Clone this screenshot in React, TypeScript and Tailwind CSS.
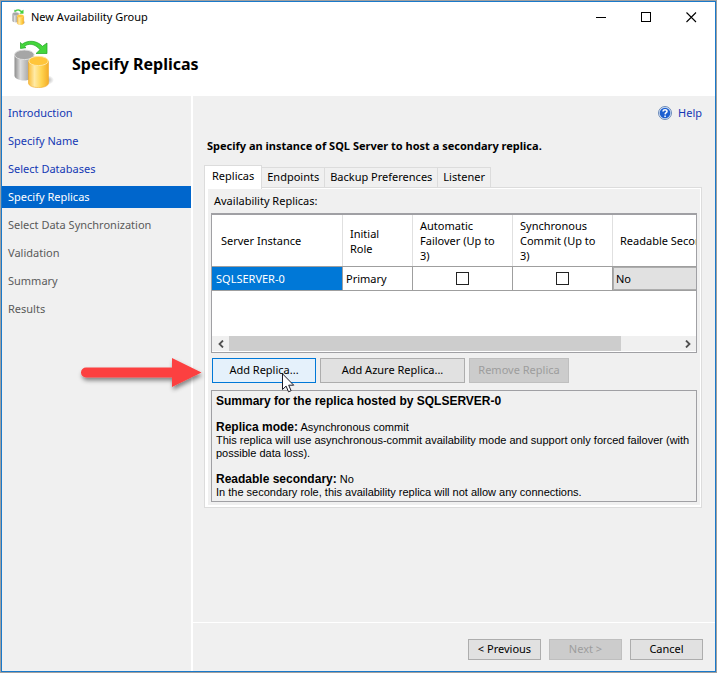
import { useState } from "react";

type Step = { label: string; state: "done" | "current" | "pending" };

const steps: Step[] = [
  { label: "Introduction", state: "done" },
  { label: "Specify Name", state: "done" },
  { label: "Select Databases", state: "done" },
  { label: "Specify Replicas", state: "current" },
  { label: "Select Data Synchronization", state: "pending" },
  { label: "Validation", state: "pending" },
  { label: "Summary", state: "pending" },
  { label: "Results", state: "pending" },
];

const stepStyles = {
  done: "text-[#1438b4]",
  current: "bg-[#0066cc] text-white",
  pending: "text-[#5a5a5a]",
};

const tabs = ["Replicas", "Endpoints", "Backup Preferences", "Listener"];

function ReplicaLogo({ className, id }: { className: string; id: string }) {
  return (
    <svg className={className} viewBox="0 0 40 48" aria-hidden="true">
      <defs>
        <linearGradient id={`${id}-grey`} x1="0" x2="1">
          <stop offset="0" stopColor="#8c8c8c" />
          <stop offset="0.3" stopColor="#dedede" />
          <stop offset="0.65" stopColor="#b2b2b2" />
          <stop offset="1" stopColor="#8c8c8c" />
        </linearGradient>
        <linearGradient id={`${id}-gold`} x1="0" x2="1">
          <stop offset="0" stopColor="#f9bd3c" />
          <stop offset="0.3" stopColor="#ffeaa6" />
          <stop offset="0.65" stopColor="#ffd450" />
          <stop offset="1" stopColor="#f4ad28" />
        </linearGradient>
        <radialGradient id={`${id}-shade`}>
          <stop offset="0" stopColor="#777" stopOpacity="0.7" />
          <stop offset="1" stopColor="#777" stopOpacity="0" />
        </radialGradient>
      </defs>
      <ellipse cx="32" cy="40" rx="8" ry="5" fill={`url(#${id}-shade)`} />
      <path d="M0.500 15.500v20c0 2.600 4 5 9.500 5s10-2.400 10-5v-20z" fill={`url(#${id}-grey)`} />
      <ellipse cx="10.300" cy="14.800" rx="9.800" ry="4.800" fill="#a6a6a6" stroke="#dedede" />
      <path d="M14.500 21v22c0 2.600 4 4.600 10 4.600s10-2 10-4.600V21z" fill={`url(#${id}-gold)`} stroke="#f0a92a" strokeWidth="0.600" />
      <ellipse cx="24.500" cy="21" rx="9.700" ry="4.600" fill="#ffc53a" stroke="#ffe6a0" />
      <path d="M6.500 2.500L8 4.300C13.500 0 22.500 0 28.500 6.300L33 3V13.500H22l4-3.800C21 3.500 14.500 3 10.500 6.300l1.500 1.400L6.500 8.500z" fill="#44d63c" stroke="#20a323" strokeWidth="0.700" />
    </svg>
  );
}

function TitleBar() {
  return (
    <div className="flex h-[30px] items-center pr-px">
      <ReplicaLogo id="small" className="ml-[9px] h-4 w-4" />
      <span className="ml-1 grow">New Availability Group</span>
      <button aria-label="Minimize" className="flex h-full w-[45px] items-center justify-center">
        <svg className="h-[11px] w-[11px]" viewBox="0 0 11 11" shapeRendering="crispEdges">
          <path d="M0 5.500h10" stroke="#000" />
        </svg>
      </button>
      <button aria-label="Maximize" className="flex h-full w-[45px] items-center justify-center">
        <svg className="h-[11px] w-[11px]" viewBox="0 0 11 11" shapeRendering="crispEdges">
          <path d="M0.500 0.500h9v9h-9z" fill="none" stroke="#000" />
        </svg>
      </button>
      <button aria-label="Close" className="flex h-full w-[45px] items-center justify-center">
        <svg className="h-[11px] w-[11px]" viewBox="0 0 11 11">
          <path d="M0.500 0.500l9.500 9.500M10 0.500L0.500 10" stroke="#000" strokeWidth="1.100" />
        </svg>
      </button>
    </div>
  );
}

function Sidebar() {
  return (
    <nav className="flex w-[191px] shrink-0 flex-col gap-1.5 border-r-2 border-white pt-1.5">
      {steps.map((step) => (
        <a key={step.label} href="#" className={`flex h-[22px] items-center pl-1.5 ${stepStyles[step.state]}`}>
          {step.label}
        </a>
      ))}
    </nav>
  );
}

function ReplicaGrid() {
  const [automatic, setAutomatic] = useState(false);
  const [synchronous, setSynchronous] = useState(false);
  const head = "border-r border-[#e0e0e0] px-[7px] font-normal";
  const cell = "border-t border-r border-b border-[#9f9f9f]";
  const box = "block mx-auto h-[13px] w-[13px] appearance-none border border-[#222] bg-white";
  return (
    <div className="flex h-[140px] flex-col overflow-hidden border border-t-2 border-[#a0a0a4] bg-white">
      <div className="min-h-0 grow overflow-hidden">
        <table className="w-[560px] table-fixed border-separate border-spacing-0 text-left leading-[15px]">
          <colgroup>
            <col className="w-[131px]" />
            <col className="w-[70px]" />
            <col className="w-[100px]" />
            <col className="w-[100px]" />
            <col />
          </colgroup>
          <thead>
            <tr className="h-[51px]">
              <th className="border-r border-[#e0e0e0] px-[9px] font-normal">Server Instance</th>
              <th className={head}>Initial<br />Role</th>
              <th className={head}>Automatic<br />Failover (Up to<br />3)</th>
              <th className={head}>Synchronous<br />Commit (Up to<br />3)</th>
              <th className={`${head} whitespace-nowrap`}>Readable Secondary</th>
            </tr>
          </thead>
          <tbody>
            <tr className="h-[25px]">
              <td className={`${cell} bg-[#0078d7] pl-1 text-white`}>SQLSERVER-0</td>
              <td className={`${cell} pl-[3px]`}>Primary</td>
              <td className={cell}>
                <input type="checkbox" aria-label="Automatic failover" checked={automatic} onChange={() => setAutomatic(!automatic)} className={box} />
              </td>
              <td className={cell}>
                <input type="checkbox" aria-label="Synchronous commit" checked={synchronous} onChange={() => setSynchronous(!synchronous)} className={box} />
              </td>
              <td className={`${cell} p-0`}>
                <select aria-label="Readable secondary" className="block h-[23px] w-full appearance-none border border-[#adadad] bg-[#e1e1e1] px-0.5">
                  <option>No</option>
                  <option>Yes</option>
                </select>
              </td>
            </tr>
          </tbody>
        </table>
      </div>
      <div className="mb-px flex h-[15px] shrink-0 bg-[#f0f0f0]">
        <button aria-label="Scroll left" className="flex w-[17px] items-center justify-center">
          <svg className="h-2 w-[6px]" viewBox="0 0 6 8"><path d="M5 0.500L1.500 4 5 7.500" fill="none" stroke="#505050" strokeWidth="1.800" /></svg>
        </button>
        <div className="grow">
          <div className="h-full w-[87%] bg-[#cdcdcd]" />
        </div>
        <button aria-label="Scroll right" className="flex w-[17px] items-center justify-center">
          <svg className="h-2 w-[6px]" viewBox="0 0 6 8"><path d="M1 0.500L4.500 4 1 7.500" fill="none" stroke="#505050" strokeWidth="1.800" /></svg>
        </button>
      </div>
    </div>
  );
}

function MouseCursor() {
  return (
    <svg className="absolute top-[15px] left-[71px] h-[20px] w-[13px]" viewBox="0 0 13 20" aria-hidden="true">
      <path d="M0.500 0.800v15.700l3.600-3.400 2.400 5.700 2.600-1.100-2.400-5.500h5z" fill="#fff" stroke="#1c1c28" />
    </svg>
  );
}

function CalloutArrow() {
  return (
    <svg className="absolute -top-1.5 right-[calc(100%+4px)] h-[44px] w-[136px]" viewBox="0 0 136 44" aria-hidden="true">
      <defs>
        <filter id="callout-shadow" x="-10%" y="-20%" width="120%" height="160%">
          <feDropShadow dx="1" dy="3" stdDeviation="2" floodColor="#000" floodOpacity="0.45" />
        </filter>
      </defs>
      <path d="M15 15.500h86V6l29.500 14.500L101 35v-9.500H15a5 5 0 0 1 0-10z" fill="#fc4141" filter="url(#callout-shadow)" />
    </svg>
  );
}

function Summary() {
  return (
    <section className="mt-[7px] h-[112px] border border-[#a0a0a4] px-1 pt-1 font-['Liberation_Sans',sans-serif] leading-[13px]">
      <h2 className="text-[12px] font-bold">Summary for the replica hosted by SQLSERVER-0</h2>
      <p className="mt-[13px]"><b className="text-[12px]">Replica mode:</b> Asynchronous commit</p>
      <p>This replica will use asynchronous-commit availability mode and support only forced failover (with<br />possible data loss).</p>
      <p className="mt-[13px]"><b className="text-[12px]">Readable secondary:</b> No</p>
      <p>In the secondary role, this availability replica will not allow any connections.</p>
    </section>
  );
}

const plainButton = "border border-[#adadad] bg-[#e1e1e1]";
const disabledButton = "border border-[#bfbfbf] bg-[#cccccc] text-[#9d9d9d]";

export default function App() {
  const [tab, setTab] = useState("Replicas");
  return (
    <div className="flex min-h-screen border border-[#a0a0a0] font-['Noto_Sans',sans-serif] text-[11px] text-black">
      <div className="flex min-w-0 grow flex-col border border-[#1979ca] bg-white">
        <header className="h-[94px]">
          <TitleBar />
          <div className="flex h-[64px] items-center pl-3">
            <ReplicaLogo id="large" className="h-12 w-10" />
            <h1 className="ml-[18px] text-[16px] font-bold">Specify Replicas</h1>
          </div>
        </header>
        <div className="flex grow bg-[#f0f0f0]">
          <Sidebar />
          <main className="flex min-w-0 grow flex-col">
            <div className="grow pr-[13px] pl-[11px]">
              <div className="flex h-[34px] items-center justify-end">
                <a href="#" className="flex items-center gap-1.5 text-[#1438b4]">
                  <svg className="h-[14px] w-[14px]" viewBox="0 0 14 14" aria-hidden="true">
                    <circle cx="7" cy="7" r="6.500" fill="#d8e6f8" stroke="#6d8bb8" />
                    <circle cx="7" cy="7" r="5.300" fill="#1d5fd0" />
                    <path d="M5 5.600C5 3 9.200 3.200 9 5.400 8.900 6.700 7.200 6.700 7.100 8.400M7.100 9.600v1.500" fill="none" stroke="#fff" strokeWidth="1.500" />
                  </svg>
                  Help
                </a>
              </div>
              <h2 className="ml-[3px] flex h-8 items-center font-bold">Specify an instance of SQL Server to host a secondary replica.</h2>
              <div role="tablist" className="mt-[3px] flex h-[22px] items-end">
                {tabs.map((name) => (
                  <button
                    key={name}
                    role="tab"
                    aria-selected={tab === name}
                    onClick={() => setTab(name)}
                    className={
                      tab === name
                        ? "relative -mb-0.5 h-[24px] border border-b-0 border-[#dcdcdc] bg-white px-[7px] pb-0.5"
                        : "h-5 border border-b-0 border-l-0 border-[#dcdcdc] px-[5px]"
                    }
                  >
                    {name}
                  </button>
                ))}
              </div>
              <div className="border border-[#dcdcdc] bg-white pt-px pr-px pb-0.5 pl-[3px]">
                <div className="bg-[#f0f0f0] px-[3px] pb-[3px]">
                  <div className="flex h-6 items-center pl-[3px]">Availability Replicas:</div>
                  <ReplicaGrid />
                  <div className="relative mt-[5px] flex h-[25px] gap-1 pl-px">
                    <button className="w-[104px] border border-[#0078d7] bg-[#e5f1fb]">Add Replica...</button>
                    <button className={`w-[145px] ${plainButton}`}>Add Azure Replica...</button>
                    <button disabled className={`w-[100px] ${disabledButton}`}>Remove Replica</button>
                    <MouseCursor />
                    <CalloutArrow />
                  </div>
                  <Summary />
                </div>
              </div>
            </div>
            <footer className="flex h-[49px] items-center justify-end gap-2 border-t border-white pt-1 pr-3">
              <button className={`h-[21px] w-[73px] ${plainButton}`}>&lt; Previous</button>
              <button disabled className={`h-[21px] w-[73px] ${disabledButton}`}>Next &gt;</button>
              <button className={`h-[21px] w-[73px] ${plainButton}`}>Cancel</button>
            </footer>
          </main>
        </div>
      </div>
    </div>
  );
}
